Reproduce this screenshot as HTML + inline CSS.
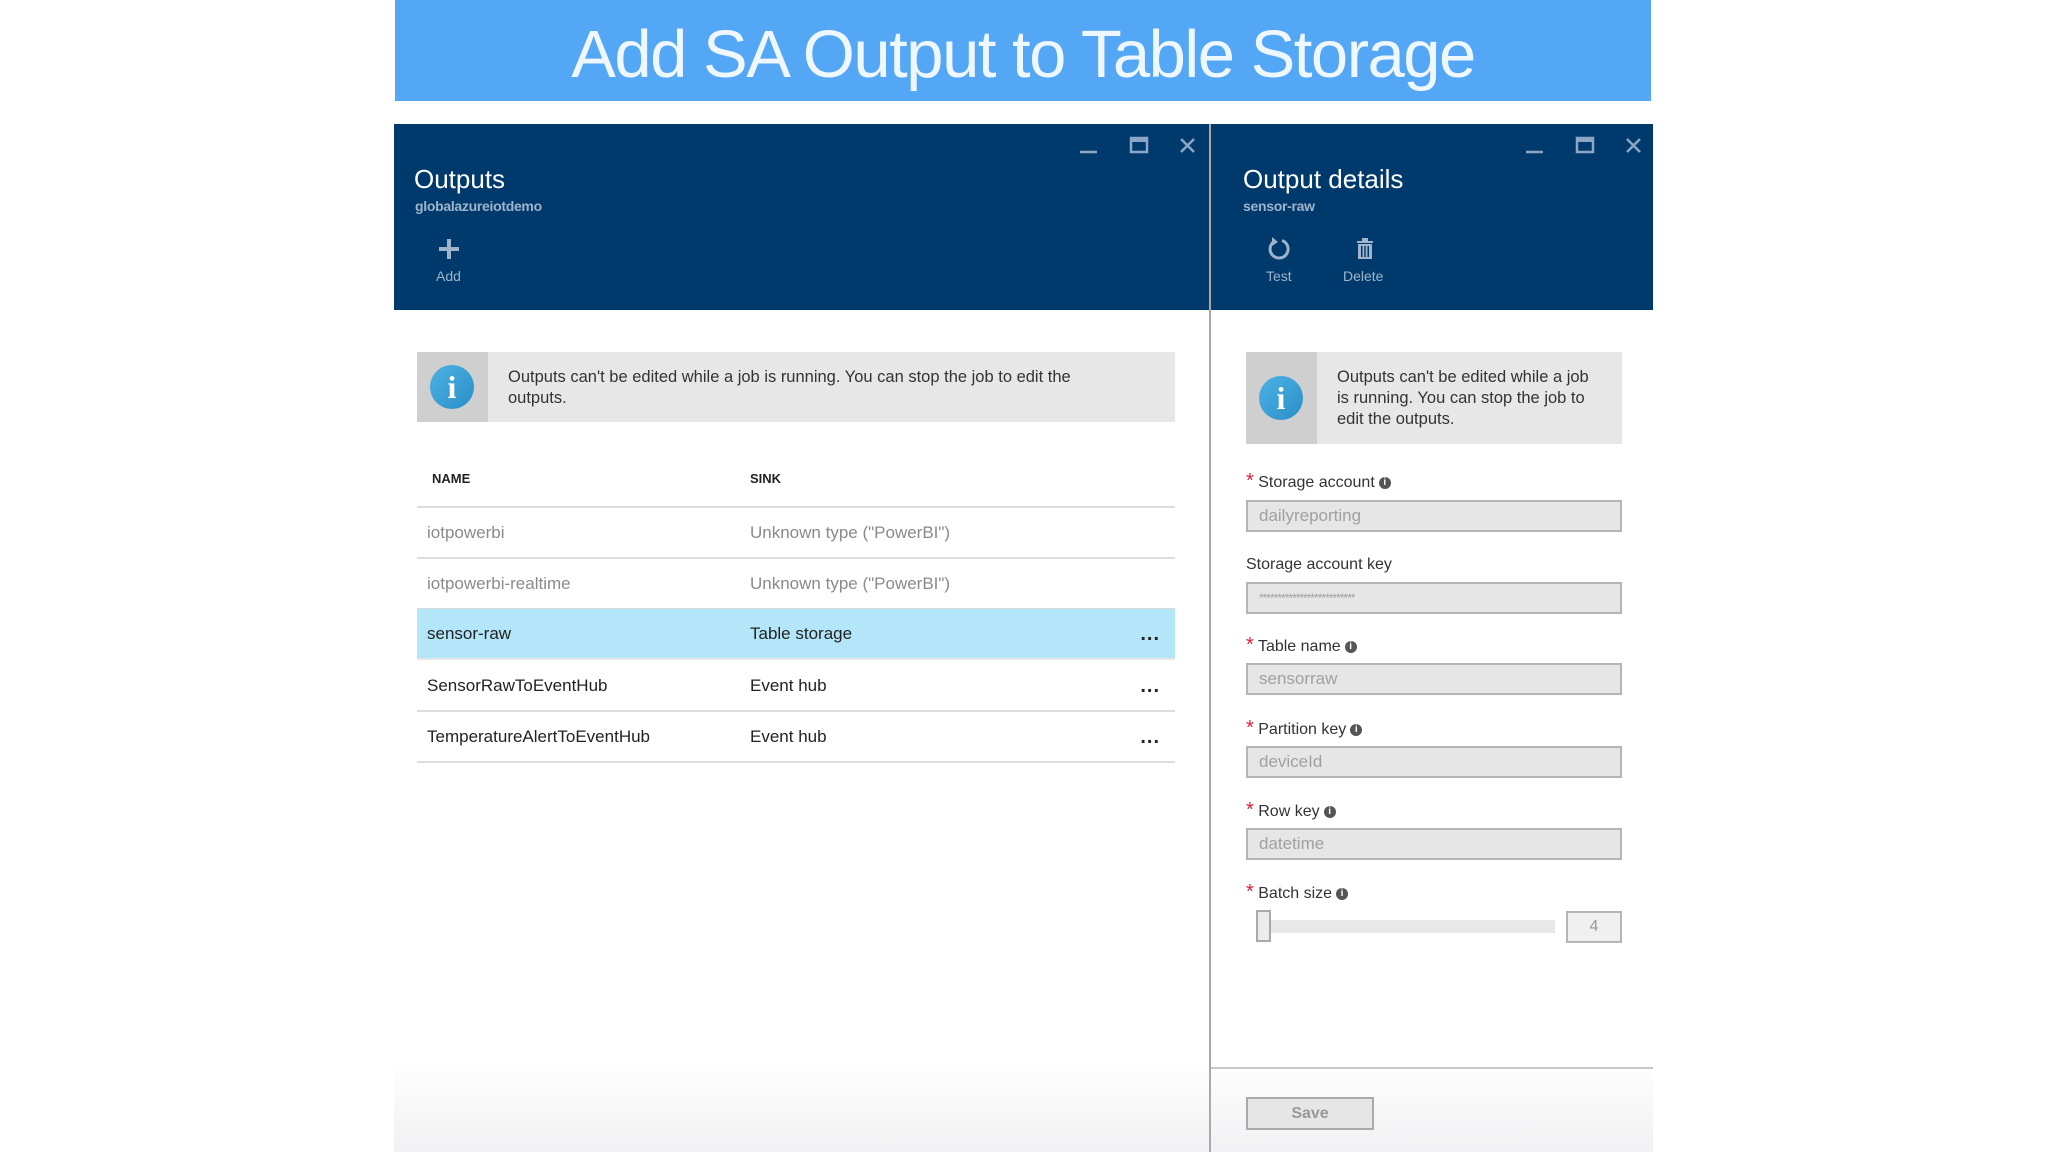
<!DOCTYPE html>
<html><head><meta charset="utf-8"><style>
*{margin:0;padding:0;box-sizing:border-box}
body{width:2048px;height:1152px;background:#fff;position:relative;overflow:hidden;font-family:"Liberation Sans",sans-serif}
.a{position:absolute;white-space:nowrap}
.banner{left:395px;top:0;width:1256px;height:101px;background:#54a7f5}
.title{left:395px;width:1256px;top:16px;text-align:center;color:rgba(255,255,255,0.9);font-size:67px;letter-spacing:-1.5px}
.hdr{top:124px;height:186px;background:#003a6d}
.t{color:#fff;font-size:26px}
.sub{color:#9fb3ca;font-size:14px;font-weight:bold;letter-spacing:-0.3px}
.lbl{color:#9fb3ca;font-size:14px}
.info{background:#e7e7e7}
.info .ic{position:absolute;left:0;top:0;width:71px;height:100%;background:#cfcfcf}
.circ{position:absolute;left:13px;width:44px;height:44px;border-radius:50%;background:linear-gradient(135deg,#4cb2e4,#2b8fc8);color:#fff;font:bold 32px "Liberation Serif",serif;text-align:center;line-height:44px}
.itxt{color:#333;font-size:16.5px;line-height:21px;position:absolute}
.th{font-size:13px;font-weight:bold;color:#222}
.row{left:417px;width:758px;height:51px;border-bottom:2px solid #dcdcdc}
.cell{position:absolute;top:15px;font-size:17px}
.dots{position:absolute;right:15px;top:14px;font-size:20px;font-weight:bold;color:#222;letter-spacing:1px}
.fl{font-size:16px;color:#333}
.st{color:#e0203c;font-size:20px;line-height:16px}
.ii{display:inline-block;width:12px;height:12px;border-radius:50%;background:#555;color:#fff;font-size:10px;font-weight:bold;text-align:center;line-height:12px;vertical-align:2px;margin-left:4px}
.inp{left:1246px;width:376px;height:32px;background:#e6e6e6;border:2px solid #b5b5b5;color:#a0a0a0;font-size:17px;padding-left:11px;line-height:28px}
</style></head><body>
<div class="a banner"></div>
<div class="a title">Add SA Output to Table Storage</div>

<div class="a hdr" style="left:394px;width:815px"></div>
<div class="a hdr" style="left:1211px;width:442px"></div>
<div class="a" style="left:1209px;top:124px;width:2px;height:1028px;background:#a9a9a9"></div>
<div class="a" style="left:394px;top:1060px;width:815px;height:92px;background:linear-gradient(#fff,#f1f1f3)"></div>
<div class="a" style="left:1211px;top:1070px;width:442px;height:82px;background:linear-gradient(#fdfdfe,#f1f1f3)"></div>

<svg class="a" style="left:1075px;top:134px" width="130" height="24" viewBox="0 0 130 24"><g stroke="#8ba6c6" stroke-width="2.5" fill="none"><path d="M5 18H22"/><rect x="56" y="4" width="16" height="14"/><path d="M56 6H72" stroke-width="4"/><path d="M106 5L119 18M119 5L106 18"/></g></svg>
<svg class="a" style="left:1521px;top:134px" width="130" height="24" viewBox="0 0 130 24"><g stroke="#8ba6c6" stroke-width="2.5" fill="none"><path d="M5 18H22"/><rect x="56" y="4" width="16" height="14"/><path d="M56 6H72" stroke-width="4"/><path d="M106 5L119 18M119 5L106 18"/></g></svg>

<div class="a t" style="left:414px;top:164px">Outputs</div>
<div class="a sub" style="left:415px;top:198px">globalazureiotdemo</div>
<svg class="a" style="left:437px;top:237px" width="24" height="24"><path d="M12 2V22M2 12H22" stroke="#9fb3ca" stroke-width="4"/></svg>
<div class="a lbl" style="left:436px;top:268px">Add</div>

<div class="a t" style="left:1243px;top:164px">Output details</div>
<div class="a sub" style="left:1243px;top:198px">sensor-raw</div>
<svg class="a" style="left:1266px;top:236px" width="26" height="26" viewBox="0 0 26 26"><path d="M9 5A9 9 0 1 0 16 4.5" stroke="#9fb3ca" stroke-width="3" fill="none"/><path d="M6 1L12 6L6 10Z" fill="#9fb3ca"/></svg>
<div class="a lbl" style="left:1266px;top:268px">Test</div>
<svg class="a" style="left:1356px;top:238px" width="18" height="22" viewBox="0 0 18 22"><g fill="#9fb3ca"><rect x="1" y="3" width="16" height="2"/><rect x="6" y="0" width="6" height="3"/><path d="M2 6H16V21H2ZM5 8V19H6.5V8ZM8.3 8V19H9.7V8ZM11.5 8V19H13V8Z" fill-rule="evenodd"/></g></svg>
<div class="a lbl" style="left:1343px;top:268px">Delete</div>

<div class="a info" style="left:417px;top:352px;width:758px;height:70px"><div class="ic"></div><div class="circ" style="top:13px">i</div>
<div class="itxt" style="left:91px;top:15px">Outputs can't be edited while a job is running. You can stop the job to edit the<br>outputs.</div></div>

<div class="a th" style="left:432px;top:471px">NAME</div>
<div class="a th" style="left:750px;top:471px">SINK</div>
<div class="a" style="left:417px;top:506px;width:758px;height:2px;background:#dcdcdc"></div>
<div class="a row" style="top:508px"><span class="cell" style="left:10px;color:#8a8a8a">iotpowerbi</span><span class="cell" style="left:333px;color:#8a8a8a">Unknown type ("PowerBI")</span></div>
<div class="a row" style="top:559px"><span class="cell" style="left:10px;color:#8a8a8a">iotpowerbi-realtime</span><span class="cell" style="left:333px;color:#8a8a8a">Unknown type ("PowerBI")</span></div>
<div class="a row" style="top:609px;background:#b2e6f8;border-bottom-color:#e6e6e6"><span class="cell" style="left:10px;color:#222">sensor-raw</span><span class="cell" style="left:333px;color:#222">Table storage</span><span class="dots">...</span></div>
<div class="a row" style="top:661px"><span class="cell" style="left:10px;color:#222">SensorRawToEventHub</span><span class="cell" style="left:333px;color:#222">Event hub</span><span class="dots">...</span></div>
<div class="a row" style="top:712px"><span class="cell" style="left:10px;color:#222">TemperatureAlertToEventHub</span><span class="cell" style="left:333px;color:#222">Event hub</span><span class="dots">...</span></div>

<div class="a info" style="left:1246px;top:352px;width:376px;height:92px"><div class="ic"></div><div class="circ" style="top:24px">i</div>
<div class="itxt" style="left:91px;top:15px">Outputs can't be edited while a job<br>is running. You can stop the job to<br>edit the outputs.</div></div>

<div class="a fl" style="left:1246px;top:473px"><span class="st">*</span> Storage account<span class="ii">i</span></div>
<div class="a inp" style="top:500px">dailyreporting</div>
<div class="a fl" style="left:1246px;top:556px">Storage account key</div>
<div class="a inp" style="top:582px;font-size:12px;letter-spacing:-1px">**************************</div>
<div class="a fl" style="left:1246px;top:637px"><span class="st">*</span> Table name<span class="ii">i</span></div>
<div class="a inp" style="top:663px">sensorraw</div>
<div class="a fl" style="left:1246px;top:720px"><span class="st">*</span> Partition key<span class="ii">i</span></div>
<div class="a inp" style="top:746px">deviceId</div>
<div class="a fl" style="left:1246px;top:802px"><span class="st">*</span> Row key<span class="ii">i</span></div>
<div class="a inp" style="top:828px">datetime</div>
<div class="a fl" style="left:1246px;top:884px"><span class="st">*</span> Batch size<span class="ii">i</span></div>
<div class="a" style="left:1271px;top:920px;width:284px;height:13px;background:#e8e8e8"></div>
<div class="a" style="left:1256px;top:910px;width:15px;height:32px;background:#ececec;border:2px solid #aaa"></div>
<div class="a" style="left:1566px;top:911px;width:56px;height:32px;background:#f0f0f0;border:2px solid #b5b5b5;color:#999;font-size:16px;text-align:center;line-height:28px">4</div>

<div class="a" style="left:1211px;top:1067px;width:442px;height:2px;background:#c8c8c8"></div>
<div class="a" style="left:1246px;top:1097px;width:128px;height:33px;background:#e6e6e6;border:2px solid #aaa;color:#999;font-size:16px;font-weight:bold;text-align:center;line-height:29px">Save</div>
</body></html>
